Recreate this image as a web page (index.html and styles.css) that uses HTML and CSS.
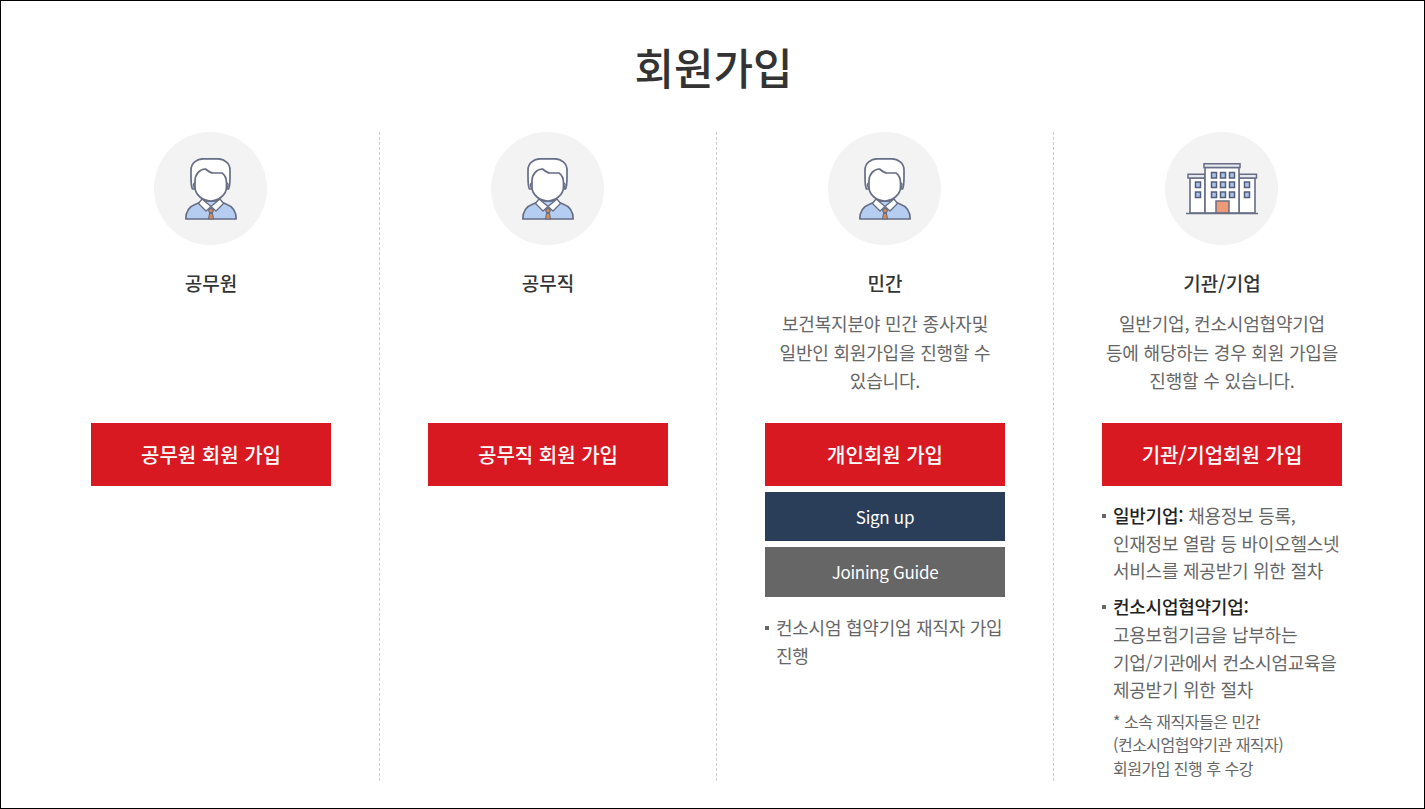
FILE: index.html
```html
<!DOCTYPE html>
<html lang="ko">
<head>
<meta charset="utf-8">
<title>회원가입</title>
<link rel="stylesheet" href="styles.css">
</head>
<body>
<svg class="defs" width="0" height="0" aria-hidden="true">
  <defs>
    <symbol id="person" viewBox="0 0 52 62">
      <path d="M0.800 61 C0.800 53 4 48.500 11 46 L18 43 H34 L41 46 C48 48.500 51.200 53 51.200 61 Z" fill="#b5cdf0" stroke="#666d85" stroke-width="1.600" stroke-linejoin="round"/>
      <path d="M23.500 52 L26 50 L28.500 52 L27.500 54.500 H24.500 Z M24.500 55.500 H27.500 L28.500 61 H23.500 Z" fill="#d98a4e" stroke="#666d85" stroke-width="1.100" stroke-linejoin="round"/>
      <path d="M17 41 L26 48.500 L21 53 L13.500 45.500 Z M35 41 L26 48.500 L31 53 L38.500 45.500 Z" fill="#fff" stroke="#666d85" stroke-width="1.300" stroke-linejoin="round"/>
      <path d="M7.500 31 C6 28 6 24 6 19 V12 C6 5 12 0.800 18 0.800 H33 C39 0.800 45 5 45 12 V19 C45 24 45 28 43.500 31 Z" fill="#fff" stroke="#666d85" stroke-width="1.700" stroke-linejoin="round"/>
      <path d="M10 25 C8 25 7.500 29 11 31 M41.500 25 C43.500 25 44 29 40.500 31" fill="#fff" stroke="#666d85" stroke-width="1.400"/>
      <path d="M10 23 C10 16 15 11 20.500 11 C23 13 25 15 28 15 H37 C40 17 41.500 20 41.500 25 V29 C41.500 37 33 43 25.800 43 C18 43 10 37 10 29 Z" fill="#fff" stroke="#666d85" stroke-width="1.700" stroke-linejoin="round"/>
    </symbol>
    <symbol id="building" viewBox="0 0 72 52">
      <path d="M4 15 H19 V50 H4 Z M53 15 H69 V50 H53 Z" fill="#fff" stroke="#666d85" stroke-width="1.600"/>
      <path d="M2 11.300 H19 V15 H2 Z M53 11.300 H70.500 V15 H53 Z" fill="#e6e8ee" stroke="#666d85" stroke-width="1.500"/>
      <path d="M19 4.500 H53 V50 H19 Z" fill="#fff" stroke="#666d85" stroke-width="1.600"/>
      <path d="M18 0.800 H54 V4.500 H18 Z" fill="#e6e8ee" stroke="#666d85" stroke-width="1.500"/>
      <g fill="#a9c3ea" stroke="#555d7a" stroke-width="1.500">
        <rect x="25.500" y="9.500" width="5" height="5.500"/><rect x="34.500" y="9.500" width="5" height="5.500"/><rect x="43.500" y="9.500" width="5" height="5.500"/>
        <rect x="25.500" y="19" width="5" height="5.500"/><rect x="34.500" y="19" width="5" height="5.500"/><rect x="43.500" y="19" width="5" height="5.500"/>
        <rect x="25.500" y="29" width="5" height="5.500"/><rect x="34.500" y="29" width="5" height="5.500"/><rect x="43.500" y="29" width="5" height="5.500"/>
        <rect x="9.500" y="19" width="5" height="5.500"/><rect x="9.500" y="29" width="5" height="5.500"/>
        <rect x="58.500" y="19" width="5" height="5.500"/><rect x="58.500" y="29" width="5" height="5.500"/>
      </g>
      <rect x="30" y="38" width="13" height="12" fill="#ee9a76" stroke="#666d85" stroke-width="1.500"/>
      <path d="M0 50.500 H73" stroke="#666d85" stroke-width="1.700"/>
    </symbol>
  </defs>
</svg>
<main class="page">
  <h1 class="title">회원가입</h1>
  <div class="columns">
    <section class="col">
      <div class="avatar"><svg class="icon-person"><use href="#person"/></svg></div>
      <h2 class="name">공무원</h2>
      <div class="desc"></div>
      <a class="btn btn-red">공무원 회원 가입</a>
    </section>
    <section class="col">
      <div class="avatar"><svg class="icon-person"><use href="#person"/></svg></div>
      <h2 class="name">공무직</h2>
      <div class="desc"></div>
      <a class="btn btn-red">공무직 회원 가입</a>
    </section>
    <section class="col">
      <div class="avatar"><svg class="icon-person"><use href="#person"/></svg></div>
      <h2 class="name">민간</h2>
      <p class="desc">보건복지분야 민간 종사자및<br>일반인 회원가입을 진행할 수<br>있습니다.</p>
      <a class="btn btn-red">개인회원 가입</a>
      <a class="btn btn-navy">Sign up</a>
      <a class="btn btn-gray">Joining Guide</a>
      <ul class="notes notes-single">
        <li>컨소시엄 협약기업 재직자 가입 진행</li>
      </ul>
    </section>
    <section class="col">
      <div class="avatar"><svg class="icon-building"><use href="#building"/></svg></div>
      <h2 class="name">기관/기업</h2>
      <p class="desc">일반기업, 컨소시엄협약기업<br>등에 해당하는 경우 회원 가입을<br>진행할 수 있습니다.</p>
      <a class="btn btn-red">기관/기업회원 가입</a>
      <ul class="notes">
        <li><strong>일반기업:</strong> 채용정보 등록,<br>인재정보 열람 등 바이오헬스넷<br>서비스를 제공받기 위한 절차</li>
        <li><strong>컨소시업협약기업:</strong><br>고용보험기금을 납부하는<br>기업/기관에서 컨소시엄교육을<br>제공받기 위한 절차
          <p class="small">* 소속 재직자들은 민간<br>(컨소시엄협약기관 재직자)<br>회원가입 진행 후 수강</p>
        </li>
      </ul>
    </section>
  </div>
</main>
</body>
</html>
```
FILE: styles.css
```css
* { box-sizing: border-box; }
html, body { margin: 0; padding: 0; }
body {
  width: 1425px;
  height: 809px;
  overflow: hidden;
  background: #fff;
  font-family: "Noto Sans CJK KR", "Noto Sans", sans-serif;
  color: #333;
}
.defs { display: block; height: 0; }
.page {
  height: 809px;
  border: 1px solid #000;
}
.title {
  margin: 0;
  height: 131px;
  padding: 34px 0 0 2px;
  text-align: center;
  font-size: 43px;
  line-height: 62px;
  font-weight: 500;
  color: #333;
}
.columns {
  display: flex;
  height: 649px;
  padding: 0 33px 0 42px;
}
.col {
  flex: 1 1 0;
  display: flex;
  flex-direction: column;
  align-items: center;
  border-right: 1px dashed #ccc;
}
.col:last-child { border-right-color: transparent; }
.avatar {
  width: 113px;
  height: 113px;
  margin-right: 1px;
  border-radius: 50%;
  background: #f3f3f3;
  display: flex;
  align-items: center;
  justify-content: center;
  flex: none;
}
.icon-person { width: 52px; height: 62px; flex: none; }
.icon-building { width: 72px; height: 52px; flex: none; }
.name {
  margin: 23px 0 0;
  height: 30px;
  font-size: 19px;
  line-height: 30px;
  font-weight: 500;
  flex: none;
  color: #333;
}
.desc {
  margin: 11px 0 0;
  height: 98px;
  width: 240px;
  flex: none;
  text-align: center;
  font-size: 18px;
  line-height: 28.500px;
  letter-spacing: -0.200px;
  color: #666;
}
.btn {
  display: block;
  width: 240px;
  text-align: center;
  flex: none;
}
.btn-red {
  margin-top: 16px;
  height: 63px;
  line-height: 63px;
  font-size: 20px;
  font-weight: 500;
  background: #d91921;
  color: #fff;
}
.btn-navy {
  margin-top: 6px;
  height: 49px;
  line-height: 50px;
  font-size: 17px;
  letter-spacing: -0.300px;
  background: #2b3e59;
  color: #fff;
}
.btn-gray {
  margin-top: 6px;
  height: 50px;
  line-height: 49px;
  font-size: 17px;
  letter-spacing: -0.300px;
  background: #666;
  color: #fff;
}
.notes {
  list-style: none;
  margin: 16px 0 0;
  padding: 0;
  width: 240px;
  flex: none;
  font-size: 18px;
  line-height: 27.700px;
  letter-spacing: -0.250px;
  color: #666;
}
.notes-single { margin-top: 17px; }
.notes li {
  position: relative;
  padding-left: 11px;
  margin-bottom: 8px;
  white-space: nowrap;
}
.notes-single li { white-space: normal; }
.notes li::before {
  content: "";
  position: absolute;
  left: 0;
  top: 12px;
  width: 4px;
  height: 4px;
  background: #666;
}
.notes strong { font-weight: 500; color: #222; }
.small {
  margin: 6px 0 0;
  font-size: 16px;
  line-height: 23.500px;
  letter-spacing: -0.500px;
  color: #666;
}
```
